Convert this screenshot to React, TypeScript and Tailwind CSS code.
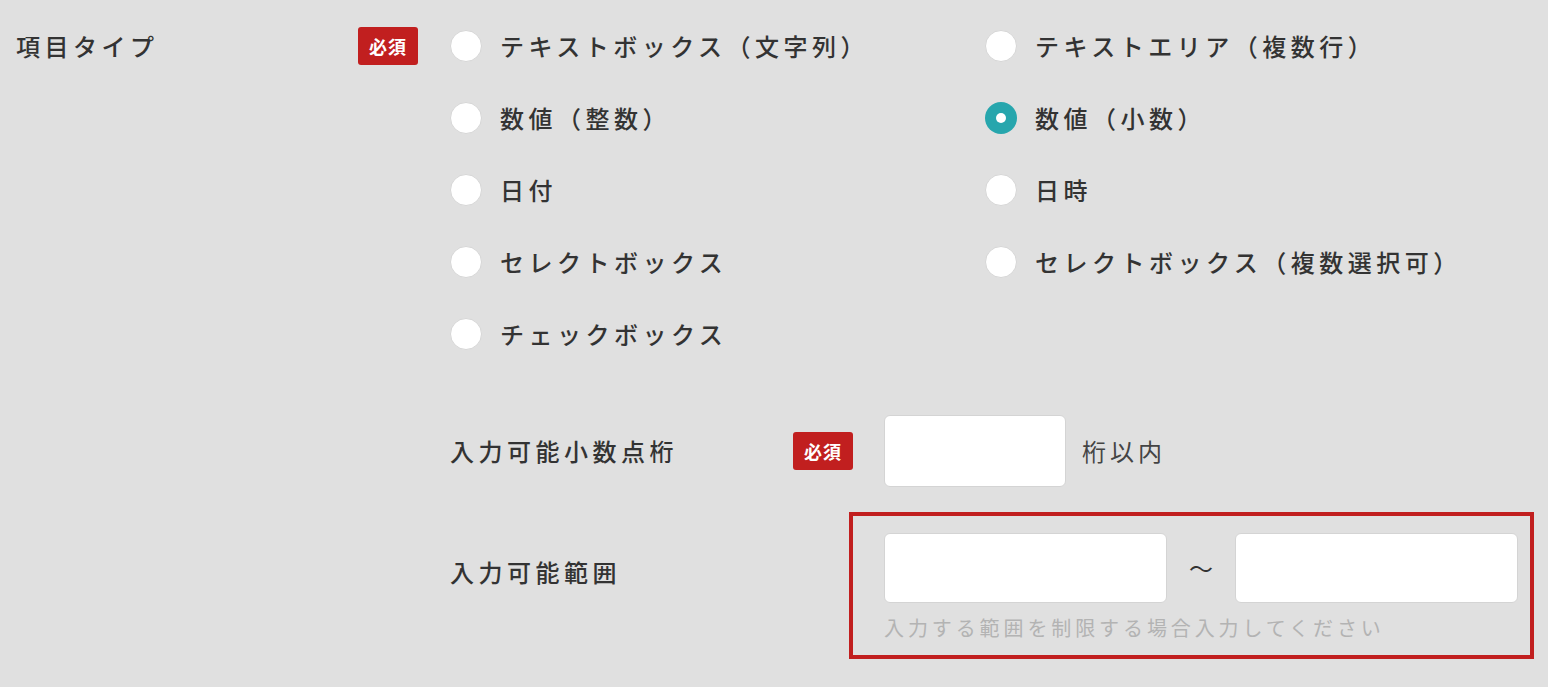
const font = { fontFamily: '"Noto Sans CJK JP", "Noto Sans", sans-serif' };

const options = [
  "テキストボックス（文字列）",
  "テキストエリア（複数行）",
  "数値（整数）",
  "数値（小数）",
  "日付",
  "日時",
  "セレクトボックス",
  "セレクトボックス（複数選択可）",
  "チェックボックス",
];

function Badge() {
  return (
    <span className="flex h-[38px] w-[60px] shrink-0 items-center justify-center rounded-[3px] bg-[#c11f1f] text-[18px] font-bold tracking-[1px] text-white">
      必須
    </span>
  );
}

function Radio({ label, checked }: { label: string; checked?: boolean }) {
  return (
    <label className="flex h-[72px] items-center gap-[18px]">
      {checked ? (
        <span className="flex h-[32px] w-[32px] items-center justify-center rounded-full bg-[#27a6ad]">
          <span className="h-[10px] w-[10px] rounded-full bg-white" />
        </span>
      ) : (
        <span className="h-[32px] w-[32px] rounded-full border border-[#d6d6d6] bg-white" />
      )}
      <span className="text-[24px] font-medium tracking-[4.5px] text-[#333]">{label}</span>
    </label>
  );
}

export default function App() {
  return (
    <div className="h-[687px] w-full overflow-hidden bg-[#e0e0e0]" style={font}>
      <div className="flex pt-[10px] pl-[16px]">
        <div className="flex h-[72px] w-[342px] items-center">
          <span className="text-[24px] font-medium tracking-[4.5px] text-[#333]">項目タイプ</span>
        </div>
        <div className="flex h-[72px] w-[92px] items-center">
          <Badge />
        </div>

        <div className="flex flex-col">
          <div className="grid grid-cols-[535px_1fr]">
            {options.map((o) => (
              <Radio key={o} label={o} checked={o === "数値（小数）"} />
            ))}
          </div>

          <div className="mt-[45px] flex items-center">
            <span className="w-[343px] text-[24px] font-medium tracking-[4.5px] text-[#333]">入力可能小数点桁</span>
            <Badge />
            <div className="ml-[31px] h-[72px] w-[182px] rounded-[6px] border border-[#d4d4d4] bg-white" />
            <span className="ml-[16px] text-[24px] tracking-[4px] text-[#444]">桁以内</span>
          </div>

          <div className="mt-[25px] flex items-start">
            <span className="mt-[42px] w-[399px] text-[24px] font-medium tracking-[4.5px] text-[#333]">入力可能範囲</span>
            <div className="w-[685px] border-4 border-[#c11f1f] pt-[17px] pr-[12px] pb-[12px] pl-[31px]">
              <div className="flex items-center">
                <div className="h-[70px] w-[283px] rounded-[6px] border border-[#d4d4d4] bg-white" />
                <span className="w-[68px] text-center text-[24px] text-[#333]">〜</span>
                <div className="h-[70px] w-[283px] rounded-[6px] border border-[#d4d4d4] bg-white" />
              </div>
              <p className="mt-[10px] text-[20px] tracking-[3.9px] text-[#b3b3b3]">
                入力する範囲を制限する場合入力してください
              </p>
            </div>
          </div>
        </div>
      </div>
    </div>
  );
}
